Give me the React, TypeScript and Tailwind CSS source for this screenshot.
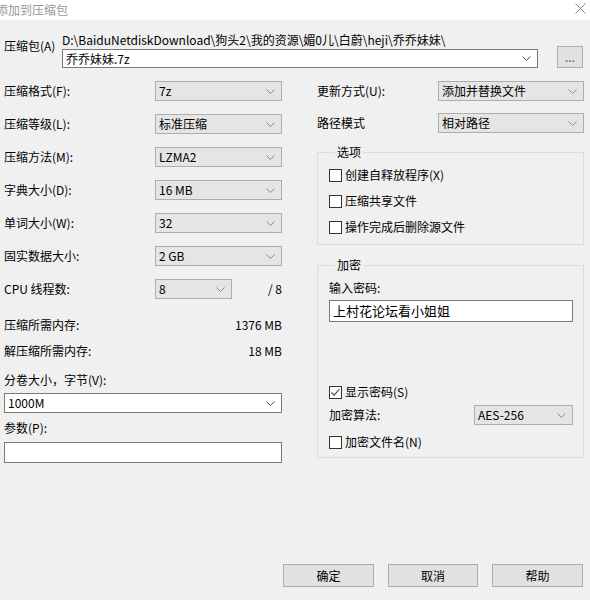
import React from 'react';

const Chevron = ({ color = '#7a7a7a' }: { color?: string }) => (
  <svg width="9" height="5" viewBox="0 0 9 5" className="shrink-0">
    <path d="M0.5 0.5 L4.5 4.5 L8.5 0.5" fill="none" stroke={color} strokeWidth="1" />
  </svg>
);

// Non-editable dropdown (grey face)
function Select({ value, className }: { value: string; className: string }) {
  return (
    <div className={`h-[20px] flex items-center justify-between pl-[3px] pr-[6px] bg-[#e5e5e5] border border-[#adadad] ${className}`}>
      <span className="leading-[14px]">{value}</span>
      <Chevron color="#8a8a8a" />
    </div>
  );
}

// Editable combobox (white face)
function Combo({ value, className }: { value: string; className: string }) {
  return (
    <div className={`flex items-center justify-between pl-[3px] pr-[6px] bg-white border border-[#7a7a7a] ${className}`}>
      <span className="leading-[14px]">{value}</span>
      <Chevron color="#555" />
    </div>
  );
}

function Check({ label, checked = false, className = '' }: { label: string; checked?: boolean; className?: string }) {
  return (
    <div className={`h-[16px] flex items-center gap-[3px] ${className}`}>
      <div className="w-[13px] h-[13px] bg-white border border-[#333] flex items-center justify-center">
        {checked && (
          <svg width="11" height="11" viewBox="0 0 11 11">
            <path d="M1.5 5.5 L4.2 8.2 L9.5 2" fill="none" stroke="#444" strokeWidth="1.1" />
          </svg>
        )}
      </div>
      <span className="leading-[14px]">{label}</span>
    </div>
  );
}

const LEFT_ROWS = [
  { label: '压缩格式(F):', value: '7z' },
  { label: '压缩等级(L):', value: '标准压缩' },
  { label: '压缩方法(M):', value: 'LZMA2' },
  { label: '字典大小(D):', value: '16 MB' },
  { label: '单词大小(W):', value: '32' },
  { label: '固实数据大小:', value: '2 GB' },
];

export default function App() {
  return (
    <div className="w-[590px] h-[600px] flex flex-col bg-[#f0f0f0] text-[12px] text-black overflow-hidden font-['Noto_Sans_CJK_SC','Microsoft_YaHei',sans-serif]">
      {/* title bar */}
      <div className="h-[20px] shrink-0 bg-white flex items-center justify-between">
        <span className="ml-[-4px] leading-[14px] text-[#999]">添加到压缩包</span>
        <svg width="11" height="11" viewBox="0 0 11 11" className="mr-[4px] mb-[4px]">
          <path d="M0.5 0.5 L10.5 10.5 M10.5 0.5 L0.5 10.5" stroke="#888" strokeWidth="1" />
        </svg>
      </div>

      <div className="pl-[4px] pt-[13px]">
        {/* archive path */}
        <div className="flex items-start">
          <div className="w-[58px] mt-[6px] leading-[14px]">压缩包(A)</div>
          <div className="flex flex-col">
            <div className="h-[14px] leading-[14px]">D:\BaiduNetdiskDownload\狗头2\我的资源\媚0儿\白蔚\heji\乔乔妹妹\</div>
            <Combo value="乔乔妹妹.7z" className="mt-[2px] w-[476px] h-[19px]" />
          </div>
          <div className="self-end ml-[19px] w-[26px] h-[22px] bg-[#e1e1e1] border border-[#adadad] flex items-center justify-center text-[#555] leading-[10px]">...</div>
        </div>

        <div className="mt-[13px] flex items-start">
          {/* left column */}
          <div className="w-[278px] flex flex-col">
            <div className="flex flex-col gap-[13px]">
              {LEFT_ROWS.map((r) => (
                <div key={r.label} className="h-[20px] flex items-center">
                  <span className="w-[151px] leading-[14px]">{r.label}</span>
                  <Select value={r.value} className="w-[127px]" />
                </div>
              ))}
              <div className="h-[20px] flex items-center">
                <span className="w-[151px] leading-[14px]">CPU 线程数:</span>
                <Select value="8" className="w-[77px]" />
                <span className="flex-1 text-right leading-[14px]">/ 8</span>
              </div>
            </div>

            <div className="mt-[18px] h-[16px] flex items-center justify-between leading-[14px]">
              <span>压缩所需内存:</span>
              <span>1376 MB</span>
            </div>
            <div className="mt-[10px] h-[16px] flex items-center justify-between leading-[14px]">
              <span>解压缩所需内存:</span>
              <span>18 MB</span>
            </div>
            <div className="mt-[13px] h-[16px] flex items-center leading-[14px]">分卷大小，字节(V):</div>
            <Combo value="1000M" className="mt-[5px] w-[278px] h-[20px]" />
            <div className="mt-[7px] h-[16px] flex items-center leading-[14px]">参数(P):</div>
            <div className="mt-[6px] w-[278px] h-[21px] bg-white border border-[#7a7a7a]" />
          </div>

          {/* right column */}
          <div className="ml-[35px] w-[267px] flex flex-col">
            <div className="h-[20px] flex items-center">
              <span className="w-[121px] leading-[14px]">更新方式(U):</span>
              <Select value="添加并替换文件" className="w-[146px]" />
            </div>
            <div className="mt-[12px] h-[20px] flex items-center">
              <span className="w-[121px] leading-[14px]">路径模式</span>
              <Select value="相对路径" className="w-[146px]" />
            </div>

            <fieldset className="mt-[12px] border border-[#dcdcdc] pl-[11px] pb-[9px]">
              <legend className="ml-[6px] px-[2px] leading-[14px]">选项</legend>
              <Check label="创建自释放程序(X)" className="mt-[8px]" />
              <Check label="压缩共享文件" className="mt-[10px]" />
              <Check label="操作完成后删除源文件" className="mt-[10px]" />
            </fieldset>

            <fieldset className="mt-[13px] border border-[#dcdcdc] pl-[11px] pb-[7px]">
              <legend className="ml-[6px] px-[2px] leading-[14px]">加密</legend>
              <div className="mt-[9px] h-[14px] leading-[14px]">输入密码:</div>
              <div className="mt-[5px] w-[244px] h-[22px] bg-white border border-[#7a7a7a] flex items-center pl-[3px] text-[13px] leading-[16px]">上村花论坛看小姐姐</div>
              <Check label="显示密码(S)" checked className="mt-[62px]" />
              <div className="mt-[5px] h-[20px] flex items-center w-[244px]">
                <span className="w-[145px] leading-[14px]">加密算法:</span>
                <Select value="AES-256" className="w-[99px]" />
              </div>
              <Check label="加密文件名(N)" className="mt-[9px]" />
            </fieldset>
          </div>
        </div>
      </div>

      {/* buttons */}
      <div className="mt-auto mb-[13px] mr-[7px] flex justify-end gap-[14px]">
        {['确定', '取消', '帮助'].map((b, i) => (
          <div
            key={b}
            className={`${i === 1 ? 'w-[90px]' : 'w-[91px]'} h-[23px] bg-[#e1e1e1] border border-[#adadad] flex items-center justify-center leading-[14px]`}
          >
            {b}
          </div>
        ))}
      </div>
    </div>
  );
}
